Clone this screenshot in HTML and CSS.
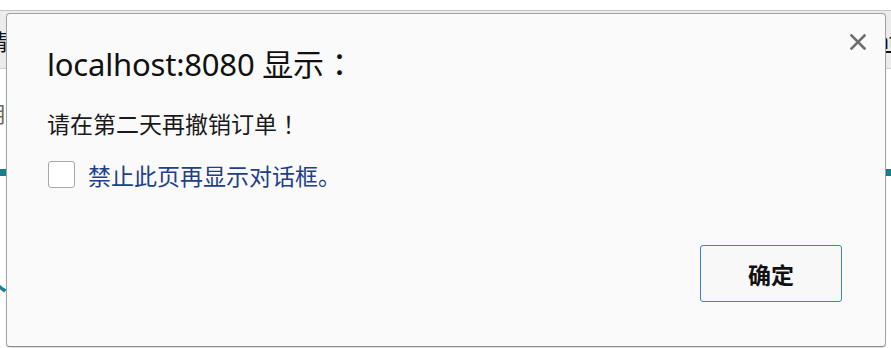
FILE: index.html
```html
<!DOCTYPE html>
<html lang="zh-CN">
<head>
<meta charset="utf-8">
<title>localhost:8080</title>
<link rel="stylesheet" href="styles.css">
</head>
<body>
<div class="page">
  <div class="topstrip"></div>
  <div class="header">
    <span class="hdr-left">请</span>
    <span class="hdr-right">ht</span>
  </div>
  <div class="content">
    <div class="gray-text">用</div>
    <div class="teal-bar"></div>
    <div class="big-text">价</div>
  </div>
</div>

<div class="dialog" role="dialog">
  <div class="close" aria-label="关闭">
    <svg width="16" height="16" viewBox="0 0 16 16"><path d="M1.5 1.5 L14.5 14.5 M14.5 1.5 L1.5 14.5" stroke="#6e6e6e" stroke-width="2.6" stroke-linecap="square" fill="none"/></svg>
  </div>
  <div class="title">localhost:8080 显示<span class="punct" lang="ja">：</span></div>
  <div class="message">请在第二天再撤销订单<span class="punct" lang="ja">！</span></div>
  <label class="suppress">
    <span class="checkbox"></span>
    <span class="suppress-text">禁止此页再显示对话框。</span>
  </label>
  <div class="actions">
    <button class="ok">确定</button>
  </div>
</div>
</body>
</html>
```

FILE: styles.css
```css
html, body {
  margin: 0;
  padding: 0;
  width: 891px;
  height: 348px;
  overflow: hidden;
  background: #ffffff;
  font-family: "Noto Sans", "Noto Sans CJK SC", sans-serif;
}

.page {
  width: 891px;
  height: 348px;
}

.topstrip {
  height: 10px;
  background: #ffffff;
  border-bottom: 1px solid #c4c4c4;
}

.header {
  height: 57px;
  background: #ececec;
  border-bottom: 1px solid #cfcfcf;
  display: flex;
  justify-content: space-between;
  align-items: center;
  overflow: hidden;
}

.hdr-left {
  margin-left: -14px;
  font-size: 22px;
  color: #111;
  font-family: "Noto Sans CJK SC", sans-serif;
}

.hdr-right {
  margin-right: -6px;
  font-size: 22px;
  color: #111;
  text-decoration: underline;
  font-family: "Noto Sans", sans-serif;
}

.content {
  display: flex;
  flex-direction: column;
}

.gray-text {
  margin-top: 30px;
  margin-left: -16px;
  font-size: 22px;
  color: #6a6a6a;
  font-family: "Noto Sans CJK SC", sans-serif;
  line-height: 26px;
}

.teal-bar {
  margin-top: 44px;
  height: 7px;
  background: #167e8c;
}

.big-text {
  margin-top: 90px;
  margin-left: -38px;
  font-size: 46px;
  line-height: 50px;
  color: #1b7f8e;
  font-family: "Noto Sans CJK SC", sans-serif;
}

.dialog {
  position: absolute;
  left: 6px;
  top: 13px;
  width: 880px;
  height: 334px;
  box-sizing: border-box;
  border: 1px solid #a2a2a2;
  border-bottom-color: #8f8f8f;
  border-radius: 4px;
  background: #fafafa;
  padding: 0 43px 44px 40px;
  display: flex;
  flex-direction: column;
  box-shadow: 0 1px 1px rgba(0,0,0,0.15);
}

.close {
  position: absolute;
  top: 20px;
  right: 19px;
  width: 16px;
  height: 16px;
  display: flex;
}

.title {
  margin-top: 29px;
  font-size: 31px;
  line-height: 40px;
  color: #111;
  letter-spacing: -0.2px;
}

.punct {
  font-family: "Noto Sans CJK JP", sans-serif;
}

.message {
  margin-top: 24px;
  font-size: 23px;
  line-height: 30px;
  color: #1a1a1a;
  font-family: "Noto Sans CJK SC", sans-serif;
}

.suppress {
  margin-top: 20px;
  display: flex;
  align-items: center;
  gap: 13px;
}

.checkbox {
  width: 27px;
  height: 27px;
  box-sizing: border-box;
  border: 1px solid #a8a8a8;
  border-radius: 3px;
  background: #ffffff;
  margin-left: 1px;
}

.suppress-text {
  font-size: 23px;
  line-height: 30px;
  color: #1f3f8a;
  font-family: "Noto Sans CJK SC", sans-serif;
  margin-top: 2px;
}

.actions {
  margin-top: auto;
  display: flex;
  justify-content: flex-end;
}

.ok {
  width: 142px;
  height: 57px;
  box-sizing: border-box;
  border: 1px solid #3f7fe0;
  border-radius: 3px;
  background: #f8f8f8;
  font-family: "Noto Sans CJK SC", sans-serif;
  font-weight: 700;
  font-size: 23px;
  color: #111;
  padding: 0;
}
```
